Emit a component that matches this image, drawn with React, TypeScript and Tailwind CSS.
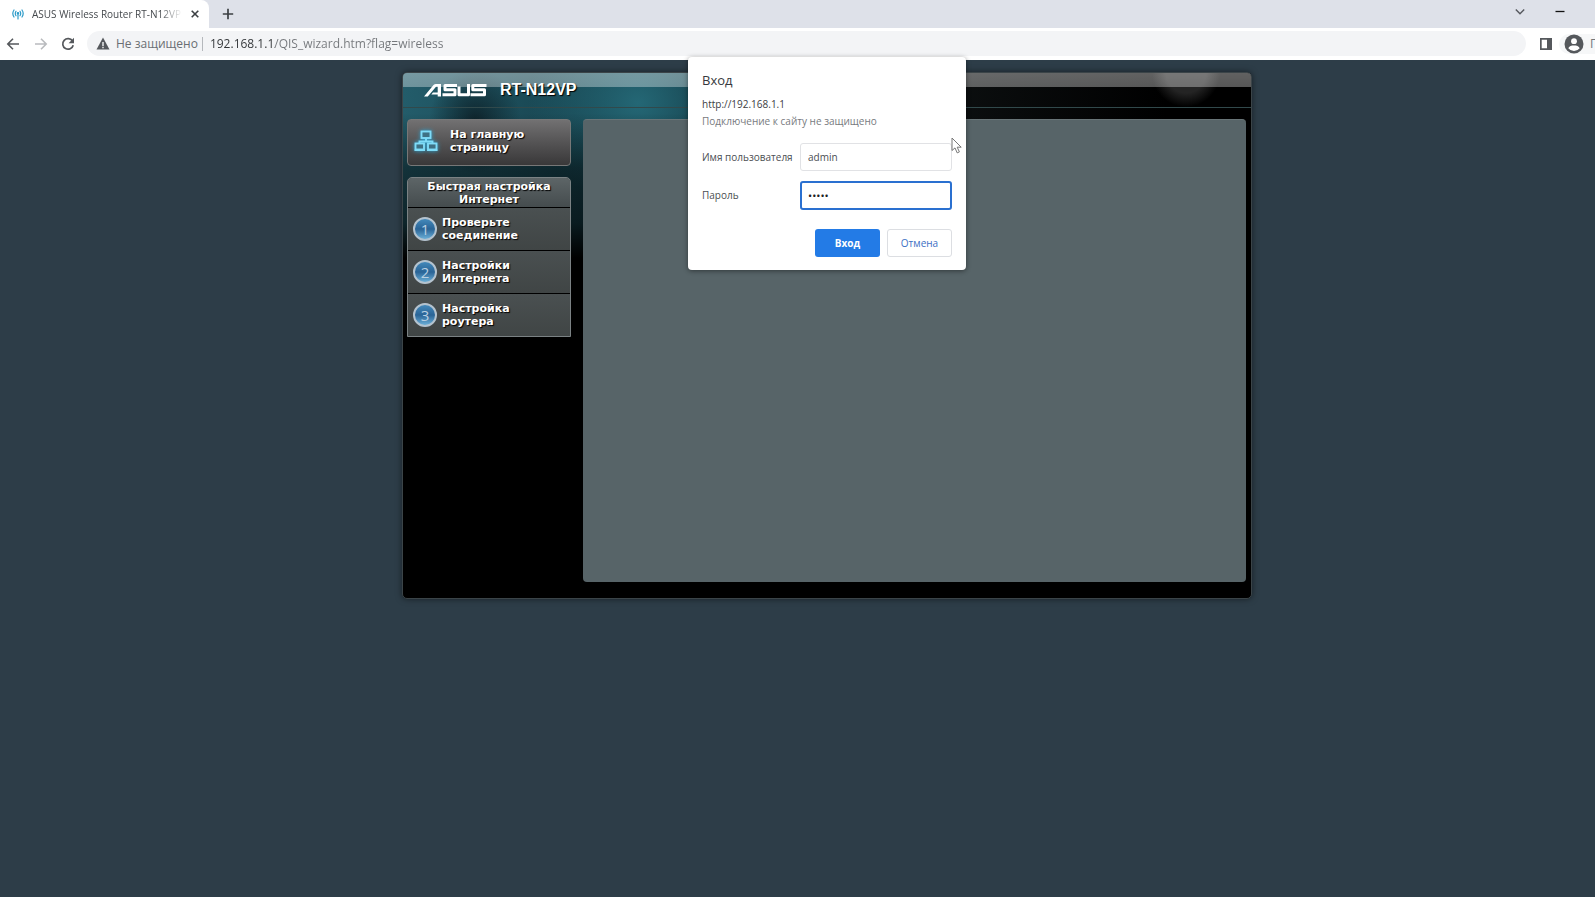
import React, { useState } from 'react';

const steps = [
  { id: 1, title: ['Проверьте', 'соединение'] },
  { id: 2, title: ['Настройки', 'Интернета'] },
  { id: 3, title: ['Настройка', 'роутера'] },
];

const TabStrip: React.FC = () => (
  <div className="flex h-7 items-stretch bg-[#dee1e9] pr-[86px]">
    <div className="flex w-[209px] items-center rounded-tr-lg bg-white pl-3 pr-[6px]">
      <svg className="h-3 w-3 shrink-0" viewBox="0 0 12 12" fill="none" stroke="#2f9cc9" strokeWidth="1.2" strokeLinecap="round">
        <path d="M2 2Q-.4 5.5 2 9M10 2q2.400 3.500 0 7M4 3.300Q2.600 5.500 4 7.700M8 3.300q1.400 2.200 0 4.400M6 6v5" />
        <circle cx="6" cy="5.300" r=".7" fill="#2f9cc9" />
      </svg>
      <span className="ml-2 w-[150px] overflow-hidden whitespace-nowrap text-[10px] leading-4 text-[#45494d] [mask-image:linear-gradient(to_right,black_85%,transparent)]">
        ASUS Wireless Router RT-N12VP
      </span>
      <button aria-label="Закрыть вкладку" className="ml-auto text-[#3c4043]">
        <svg className="h-4 w-4" viewBox="0 0 16 16" stroke="currentColor" strokeWidth="1.600">
          <path d="M4.700 4.700l6.600 6.600M11.300 4.700l-6.600 6.600" />
        </svg>
      </button>
    </div>
    <button aria-label="Новая вкладка" className="ml-[11px] text-[#3c4043]">
      <svg className="h-4 w-4" viewBox="0 0 16 16" stroke="currentColor" strokeWidth="1.700">
        <path d="M8 2.800v10.400M2.800 8h10.400" />
      </svg>
    </button>
    <div className="ml-auto flex items-center gap-6 pb-1">
      <button aria-label="Поиск вкладок">
        <svg className="h-4 w-4" viewBox="0 0 16 16" fill="none" stroke="#55585d" strokeWidth="1.400">
          <path d="M3.800 5.500L8 9.700l4.200-4.200" />
        </svg>
      </button>
      <button aria-label="Свернуть">
        <svg className="h-4 w-4" viewBox="0 0 16 16" stroke="#111" strokeWidth="1.300">
          <path d="M3.500 7.500h9" />
        </svg>
      </button>
    </div>
  </div>
);

const Toolbar: React.FC = () => (
  <div className="flex h-8 items-center bg-white pb-px pl-[5px]">
    <button aria-label="Назад" className="text-[#55585c]">
      <svg className="h-4 w-4" viewBox="0 0 16 16" fill="none" stroke="currentColor" strokeWidth="1.600">
        <path d="M14 8H3M8 2.800L2.800 8 8 13.200" />
      </svg>
    </button>
    <button aria-label="Вперёд" className="ml-3 text-[#b9bbbe]">
      <svg className="h-4 w-4" viewBox="0 0 16 16" fill="none" stroke="currentColor" strokeWidth="1.600">
        <path d="M2 8h11M8 2.800L13.200 8 8 13.200" />
      </svg>
    </button>
    <button aria-label="Обновить" className="ml-[11px] text-[#55585c]">
      <svg className="h-4 w-4" viewBox="0 0 16 16" fill="none" stroke="currentColor" strokeWidth="1.700">
        <path d="M12.500 5A5.300 5.300 0 1 0 13.200 9.200" />
        <path d="M14 1.800v5.400H8.600z" fill="currentColor" stroke="none" />
      </svg>
    </button>
    <div className="ml-[11px] flex h-[25px] grow items-center rounded-full bg-[#f3f4f6] px-2 text-[12px]">
      <svg className="h-4 w-4" viewBox="0 0 16 16">
        <path d="M8 1.500L14.500 13.500h-13z" fill="#55585c" />
        <path d="M7.300 6h1.400v4H7.300zM7.300 10.800h1.400v1.400H7.300z" fill="#f3f4f6" />
      </svg>
      <span className="ml-[5px] whitespace-nowrap text-[#6a6e73]">Не защищено</span>
      <span className="mx-1 h-[14px] w-px bg-[#b5b8bc]" />
      {/* host is darker than the path */}
      <input
        aria-label="Адрес"
        className="ml-[3px] grow bg-[linear-gradient(to_right,#303336_65px,#74777b_65px)] bg-clip-text text-transparent outline-none"
        defaultValue="192.168.1.1/QIS_wizard.htm?flag=wireless"
      />
    </div>
    <button aria-label="Боковая панель" className="ml-3">
      <svg className="h-4 w-4" viewBox="0 0 16 16">
        <path d="M2 2h12v12H2zm1.700 1.700v8.600h5.300V3.700z" fill="#55585c" fillRule="evenodd" />
      </svg>
    </button>
    <button className="ml-[5px] flex w-[95px] shrink-0 items-center gap-[6px] rounded-full bg-[#f6f7f8] pl-[5px] text-[12px] text-[#74777b]">
      <svg className="h-5 w-5 shrink-0" viewBox="0 0 20 20">
        <circle cx="10" cy="10" r="9.500" fill="#55585c" />
        <circle cx="10" cy="7.200" r="2.900" fill="#fff" />
        <path d="M4.300 14.300C5 11.900 7.500 11.400 10 11.400s5 .5 5.700 2.900A7.200 7.200 0 0 1 10 17a7.200 7.200 0 0 1-5.700-2.700z" fill="#fff" />
      </svg>
      Гость
    </button>
  </div>
);

const AsusLogo: React.FC = () => (
  <svg className="h-[14px] w-[63px]" viewBox="0 0 63 14" role="img" aria-label="ASUS">
    <path d="M0 13.500L9.500 2Q10.500 .9 12 .9H17V13.500H13.700V3.700H12L3.800 13.500z" fill="#fff" />
    <path d="M9 9.400h6v2.200H7.300z" fill="#fff" />
    <g fill="none" stroke="#fff" strokeWidth="3" strokeLinejoin="round">
      <path d="M33 2.400H21v4.400H31v5H18.500" />
      <path d="M35 3.500v8.300h9.500V1" />
      <path d="M62.500 2.400H48.800v4.400H60.500v5H46.500" />
    </g>
  </svg>
);

const RouterPage: React.FC = () => (
  <main className="mx-auto mt-3 flex min-h-[527px] w-[850px] flex-col overflow-hidden rounded-[5px] border border-[#3b4448] bg-black shadow-[0_0_6px_rgba(0,0,0,0.5)] bg-[linear-gradient(to_bottom,transparent_40px,rgba(0,0,0,0.45)_95px,rgba(0,0,0,0.6)_150px,#000_185px),radial-gradient(ellipse_46px_52px_at_72px_48px,rgba(8,20,26,0.75),transparent),radial-gradient(ellipse_110px_100px_at_235px_30px,#246775,transparent),radial-gradient(circle_at_783px_0px,#242424_20px,transparent_34px),linear-gradient(to_right,#235c6a,#153e49_25%,#0d2932_42%,#0c0f10_64%,#000_90%)] bg-[length:100%_185px] bg-no-repeat">
    <header className="flex h-[35px] items-center border-b border-[#31494b] bg-[linear-gradient(to_bottom,rgba(255,255,255,0.38),rgba(255,255,255,0.34)_14px,transparent_14px)] pl-[21px]">
      <AsusLogo />
      <h1 className="ml-[13px] font-['Liberation_Sans',sans-serif] text-[16px] font-bold text-white [text-shadow:1px_1px_1px_#000]">RT-N12VP</h1>
    </header>
    <div className="flex grow pb-4 pl-1 pr-[5px] pt-[11px] font-['DejaVu_Sans',Verdana,sans-serif] text-[11px] font-bold leading-[13px] text-white [text-shadow:1px_1px_1px_#000]">
      <nav className="w-[164px]">
        <a href="#home" className="flex h-[47px] items-center rounded-[4px] border border-[#777] bg-linear-to-b from-[#727172] to-[#393839] pl-[6px]">
          <svg className="-mt-1 h-6 w-6 shrink-0 drop-shadow-[0_0_2px_#2aa8d8]" viewBox="0 0 24 24" fill="#3f7184" stroke="#7fdcf8" strokeWidth="1.900">
            <path d="M12 9v3M5.500 15v-2.500h13V15" fill="none" />
            <rect x="7.500" y="2.500" width="9" height="6.500" />
            <rect x="1.500" y="14.500" width="8.500" height="6" />
            <rect x="14" y="14.500" width="8.500" height="6" />
            <path d="M.5 21.300h10.500M13 21.300h10.500" strokeWidth="1.400" />
          </svg>
          <span className="ml-3 -mt-1">На главную<br />страницу</span>
        </a>
        <section className="mt-[11px] overflow-hidden rounded-t-[5px] border border-[#7b8284] bg-[#454a4c]">
          <h2 className="bg-linear-to-b from-[#5d6567] to-[#454c4e] pb-px pt-[2px] text-center">Быстрая настройка<br />Интернет</h2>
          <ol>
            {steps.map((step) => (
              <li key={step.id} className="flex h-[43px] items-center border-t border-black bg-linear-to-b from-[#4a5051] to-[#404545] pl-[5px]">
                <span className="flex h-6 w-6 items-center justify-center rounded-full border-2 border-[#b4c3cf] bg-linear-to-b from-[#4389bb] via-[#2a6496] to-[#6cb0d8] font-['Open_Sans',sans-serif] text-[15px] font-normal text-[#b9d0e2] [text-shadow:none]">
                  {step.id}
                </span>
                <span className="ml-[5px]">{step.title[0]}<br />{step.title[1]}</span>
              </li>
            ))}
          </ol>
        </section>
      </nav>
      <section aria-label="Содержимое" className="ml-3 grow rounded-[4px] border-t border-[#687477] bg-[#576468]" />
    </div>
  </main>
);

const LoginDialog: React.FC = () => {
  const [user, setUser] = useState('admin');
  const [password, setPassword] = useState('admin');

  return (
    <form
      role="dialog"
      aria-labelledby="login-title"
      onSubmit={(e) => e.preventDefault()}
      className="absolute left-1/2 top-[57px] w-[278px] -translate-x-1/2 rounded-[4px] bg-white px-[14px] pb-[13px] pt-[13px] text-[10px] text-[#4b4e52] shadow-[0_1px_5px_rgba(0,0,0,0.45)]"
    >
      <h2 id="login-title" className="text-[13px] leading-5 text-[#36393d]">Вход</h2>
      <p className="mt-[5px] leading-[18px] text-[#3c4043]">http://192.168.1.1</p>
      <p className="leading-4 text-[#777a7e]">Подключение к сайту не защищено</p>
      <div className="mt-[14px] flex items-center justify-between">
        <label htmlFor="user">Имя пользователя</label>
        <input
          id="user"
          value={user}
          onChange={(e) => setUser(e.target.value)}
          className="h-7 w-[152px] rounded-[3px] border border-[#e1e2e5] px-[7px] outline-none"
        />
      </div>
      <div className="mt-[10px] flex items-center justify-between">
        <label htmlFor="password">Пароль</label>
        <input
          id="password"
          type="password"
          value={password}
          onChange={(e) => setPassword(e.target.value)}
          className="h-[29px] w-[152px] rounded-[3px] border-2 border-[#2a70d0] px-[6px] text-[11px] text-[#202124] outline-none"
        />
      </div>
      <div className="mt-[19px] flex justify-end gap-[7px]">
        <button type="submit" className="h-7 w-[65px] rounded-[3px] bg-[#237be6] font-bold text-white">Вход</button>
        <button type="button" className="h-7 w-[65px] rounded-[3px] border border-[#dcdee2] font-medium text-[#3c6fc4]">Отмена</button>
      </div>
      <svg className="absolute left-[263px] top-[80px] h-[18px] w-3" viewBox="0 0 12 18">
        <path d="M1 1v12.500l3-2.600 2.200 5 2.200-1-2.200-4.700h4z" fill="#fff" stroke="#777" strokeWidth="1" />
      </svg>
    </form>
  );
};

const App: React.FC = () => (
  <div className="min-h-screen overflow-hidden bg-[#2d3d48] font-['Open_Sans','Noto_Sans',sans-serif]">
    {/* the browser window runs past the right edge of the screen */}
    <div className="relative w-[calc(100%+59px)]">
      <TabStrip />
      <Toolbar />
      <RouterPage />
      <LoginDialog />
    </div>
  </div>
);

export default App;
